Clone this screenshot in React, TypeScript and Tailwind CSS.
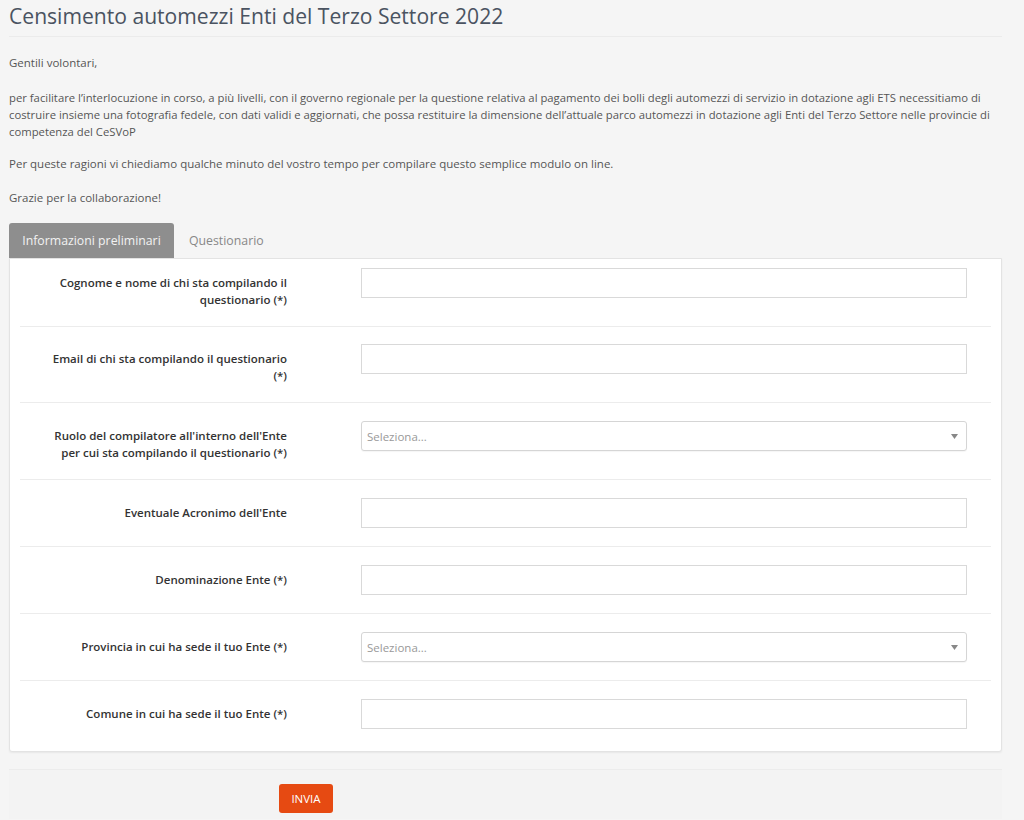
const fields = [
  { label: "Cognome e nome di chi sta compilando il questionario (*)", type: "input" },
  { label: "Email di chi sta compilando il questionario (*)", type: "input" },
  { label: "Ruolo del compilatore all'interno dell'Ente per cui sta compilando il questionario (*)", type: "select" },
  { label: "Eventuale Acronimo dell'Ente", type: "input" },
  { label: "Denominazione Ente (*)", type: "input" },
  { label: "Provincia in cui ha sede il tuo Ente (*)", type: "select" },
  { label: "Comune in cui ha sede il tuo Ente (*)", type: "input" },
];

const App = () => {
  return (
    <div
      className="min-h-screen bg-[#f5f5f5] text-[#555] text-[11.5px] leading-[17px]"
      style={{ fontFamily: '"Open Sans", "Liberation Sans", sans-serif' }}
    >
      <div className="w-[993px] ml-[9px]">
        {/* Title */}
        <h1 className="text-[21.1px] leading-[30px] text-[#4a5361] pt-[1px] pb-[5px] border-b border-[#ebebeb]">
          Censimento automezzi Enti del Terzo Settore 2022
        </h1>

        {/* Intro */}
        <div className="pt-[17px]">
          <p>Gentili volontari,</p>
          <p className="mt-[18px] text-[11.3px] whitespace-nowrap">
            per facilitare l’interlocuzione in corso, a più livelli, con il governo regionale per la questione relativa al pagamento dei bolli degli automezzi di servizio in dotazione agli ETS necessitiamo di
            <br />
            costruire insieme una fotografia fedele, con dati validi e aggiornati, che possa restituire la dimensione dell’attuale parco automezzi in dotazione agli Enti del Terzo Settore nelle provincie di
            <br />
            competenza del CeSVoP
          </p>
          <p className="mt-[15px]">
            Per queste ragioni vi chiediamo qualche minuto del vostro tempo per compilare questo semplice modulo on line.
          </p>
          <p className="mt-[17px]">Grazie per la collaborazione!</p>
        </div>

        {/* Tabs */}
        <div className="flex mt-[17px] h-[35px] text-[12.3px]">
          <div className="w-[165px] bg-[#8e8e8e] text-[#f2f2f2] rounded-t-[3px] flex items-center justify-center">
            Informazioni preliminari
          </div>
          <div className="px-[15px] flex items-center text-[#888]">Questionario</div>
        </div>

        {/* Panel */}
        <div className="bg-white border border-[#e3e3e3] rounded-b-[3px] shadow-[0_1px_2px_rgba(0,0,0,0.06)] px-[10px] pb-[4px]">
          {fields.map((f, i) => (
            <div
              key={f.label}
              className={`flex items-start pb-[18px] ${i === 0 ? "pt-[9px]" : i === 1 ? "pt-[17px]" : "pt-[18px]"} ${
                i < fields.length - 1 ? "border-b border-[#ececec]" : ""
              }`}
            >
              <div className="w-[278px] shrink-0 pl-[25px] pr-[11px] pt-[6px] text-right font-semibold text-[#333] leading-[17px]">
                {f.label}
              </div>
              <div className="ml-[63px] w-[606px]">
                {f.type === "input" ? (
                  <div className="h-[30px] border border-[#d9d9d9] bg-white" />
                ) : (
                  <div className="h-[30px] border border-[#d5d5d5] rounded-[3px] bg-white flex items-center justify-between pl-[5px] pr-[8px] shadow-[0_1px_1px_rgba(0,0,0,0.04)]">
                    <span className="text-[#999] text-[11.5px]">Seleziona...</span>
                    <svg width="7" height="5" viewBox="0 0 7 5">
                      <path d="M0 0h7L3.5 5z" fill="#888" />
                    </svg>
                  </div>
                )}
              </div>
            </div>
          ))}
        </div>

        {/* Actions */}
        <div className="mt-[17px] border-t border-[#ececec] bg-[#f3f3f3] pt-[14px] pb-[6px]">
          <button className="ml-[270px] h-[29px] w-[54px] bg-[#e64a12] text-white text-[11.5px] rounded-[3px] uppercase">
            Invia
          </button>
        </div>
      </div>
    </div>
  );
};

export default App;
